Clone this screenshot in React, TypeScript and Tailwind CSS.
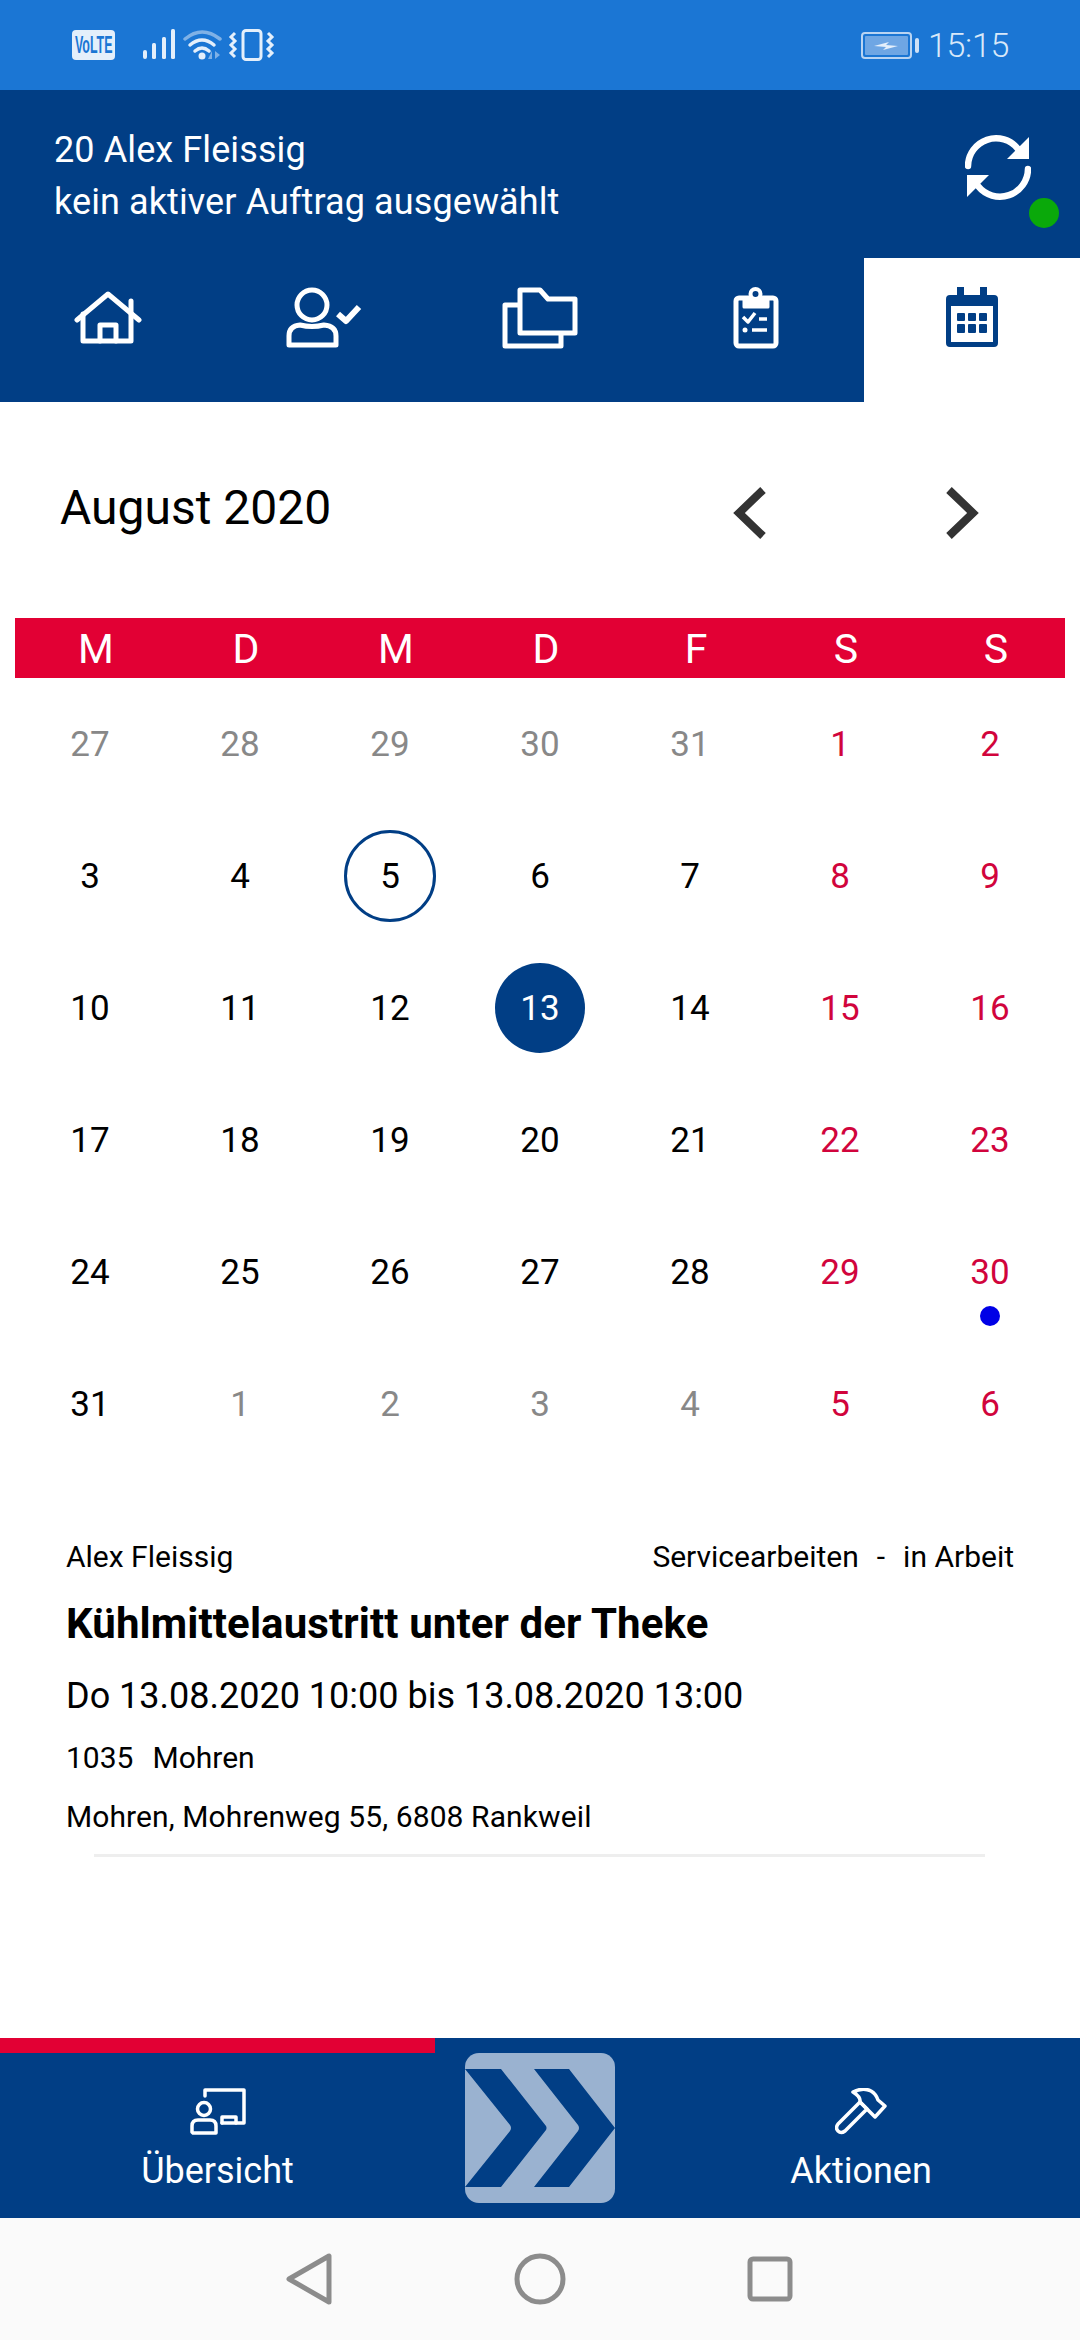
import React from "react";

const weeks = [
  [27, 28, 29, 30, 31, 1, 2],
  [3, 4, 5, 6, 7, 8, 9],
  [10, 11, 12, 13, 14, 15, 16],
  [17, 18, 19, 20, 21, 22, 23],
  [24, 25, 26, 27, 28, 29, 30],
  [31, 1, 2, 3, 4, 5, 6],
];
const heads = ["M", "D", "M", "D", "F", "S", "S"];

function StatusIcons() {
  return (
    <div className="flex items-center">
      <div className="w-[43px] h-[30px] rounded-[4px] bg-[#e4effb] ml-[72px] flex items-center justify-center overflow-hidden">
        <span className="text-[#1b76d4] text-[23px] font-bold leading-none scale-x-[0.54] font-['Liberation_Sans',sans-serif]">VoLTE</span>
      </div>
      <svg width="156" height="32" viewBox="0 0 156 32" className="ml-[27px]" fill="none">
        <g fill="#e4effb">
          <rect x="1" y="21" width="4" height="9" rx="2" />
          <rect x="10" y="14" width="4" height="16" rx="1.5" />
          <rect x="20" y="8" width="4" height="22" rx="1.5" />
          <rect x="29" y="0" width="4" height="30" rx="1.5" />
        </g>
        <path d="M43 10Q60 -4 78 10" stroke="#7fb1e6" strokeWidth="3.5" strokeLinecap="round" />
        <path d="M48 16Q60 6 72 16" stroke="#e4effb" strokeWidth="3.5" strokeLinecap="round" />
        <path d="M53 22Q60 16 67 22" stroke="#e4effb" strokeWidth="3.5" strokeLinecap="round" />
        <circle cx="60" cy="27" r="3.5" fill="#e4effb" />
        <path d="M70 30v-8l-4 8zM73 22v8l5-4z" fill="#7fb1e6" />
        <rect x="101" y="1.5" width="18" height="29" rx="3" stroke="#e4effb" strokeWidth="3" />
        <path d="M93 4l-4 4 4 4-4 4 4 4-4 4 4 4M126 4l4 4-4 4 4 4-4 4 4 4-4 4" stroke="#e4effb" strokeWidth="3" />
      </svg>
      <div className="flex-1" />
      <svg width="58" height="27" viewBox="0 0 58 27" fill="none" className="shrink-0">
        <rect x="1" y="1" width="49" height="25" rx="3" stroke="#b9d4f2" strokeWidth="2" />
        <rect x="4" y="4" width="43" height="19" rx="1" fill="#6ea6e4" />
        <rect x="54" y="6" width="4" height="15" rx="2" fill="#cfe1f6" />
        <path d="M13 14l15-4-3 3 12 1-15 4 3-3z" fill="#e4effb" />
      </svg>
      <span className="ml-[9px] mr-[71px] text-[34px] tracking-[-0.3px] leading-none text-[#d9e8f9] font-light">15:15</span>
    </div>
  );
}

function SyncIcon() {
  return (
    <svg width="66" height="66" viewBox="0 0 66 66" fill="none">
      <path d="M3 32A28 28 0 0 1 53 15" stroke="#fff" strokeWidth="6.5" strokeLinecap="round" />
      <path d="M64 3V25H42Z" fill="#fff" />
      <path d="M63 35A28 28 0 0 1 13 52" stroke="#fff" strokeWidth="6.5" strokeLinecap="round" />
      <path d="M2 63V41H24Z" fill="#fff" />
    </svg>
  );
}

function HomeIcon() {
  return (
    <svg width="68" height="53" viewBox="0 0 68 53" fill="none" stroke="#fff" strokeWidth="5" strokeLinecap="round" strokeLinejoin="round">
      <path d="M3 29L34 3L65 29" />
      <path d="M57 10V50H9V23" />
      <path d="M26 50V34H42V50" />
    </svg>
  );
}

function UserCheckIcon() {
  return (
    <svg width="76" height="62" viewBox="0 0 76 62" fill="none" stroke="#fff" strokeWidth="5" strokeLinejoin="round">
      <circle cx="26" cy="18" r="15" />
      <path d="M3 58V49Q3 39 14 38Q26 41 38 38Q50 39 50 49V58Z" />
      <path d="M52 27L60 34L73 20" strokeWidth="6" />
    </svg>
  );
}

function FolderIcon() {
  return (
    <svg width="76" height="62" viewBox="0 0 76 62" fill="none" stroke="#fff" strokeWidth="5" strokeLinejoin="round">
      <path d="M18 3H38L46 12H73V46H18Z" />
      <path d="M17 18H3V59H59V46" />
    </svg>
  );
}

function ClipboardIcon() {
  return (
    <svg width="46" height="62" viewBox="0 0 46 62" fill="none" stroke="#fff" strokeLinejoin="round">
      <rect x="3" y="11" width="40" height="48" rx="3" strokeWidth="5" />
      <path d="M11 11H35V20H11Z" fill="#fff" strokeWidth="3" />
      <circle cx="22.5" cy="7" r="5" fill="#013e85" strokeWidth="4" />
      <path d="M10 30L15 35L22 26" strokeWidth="3.5" />
      <path d="M26 32H34M19 43H34" strokeWidth="3.5" />
      <circle cx="12" cy="43" r="2.5" fill="#fff" strokeWidth="0" />
    </svg>
  );
}

function CalendarIcon() {
  return (
    <svg width="52" height="60" viewBox="0 0 52 60" fill="#013e85">
      <path fillRule="evenodd" d="M4 8H11V0H18V8H34V0H41V8H48Q52 8 52 12V56Q52 60 48 60H4Q0 60 0 56V12Q0 8 4 8ZM5 19V55H47V19Z" />
      <rect x="11" y="26" width="8" height="8" rx="1" />
      <rect x="22" y="26" width="8" height="8" rx="1" />
      <rect x="33" y="26" width="8" height="8" rx="1" />
      <rect x="11" y="37" width="8" height="9" rx="1" />
      <rect x="22" y="37" width="8" height="9" rx="1" />
      <rect x="33" y="37" width="8" height="9" rx="1" />
    </svg>
  );
}

function OverviewIcon() {
  return (
    <svg width="56" height="47" viewBox="0 0 56 47" fill="none" stroke="#fff" strokeWidth="3.5" strokeLinejoin="round" strokeLinecap="round">
      <circle cx="14" cy="21" r="6.5" />
      <path d="M2 44V38Q2 32 8 32H20Q26 32 26 38V45H3Z" />
      <path d="M15 8V2H54V35H32" />
      <path d="M32 35V29H46V35" />
    </svg>
  );
}

function HammerIcon() {
  return (
    <svg width="52" height="47" viewBox="0 0 52 47" fill="none" stroke="#fff" strokeWidth="3.5" strokeLinejoin="round">
      <path d="M18 4Q28 -1 36 3Q41 6 43 12L50 18L40 29L32 21L25 14Q26 9 18 4Z" />
      <path d="M25 14L32 21L10 43Q6 46 3 43Q0 40 3 36Z" />
    </svg>
  );
}

function Chevrons() {
  return (
    <svg width="150" height="150" viewBox="0 0 150 150" fill="#013e85">
      <path d="M0 16H36L81 73Q82 75 81 77L36 134H0L45 78Q47 75 45 72Z" />
      <path d="M69 16H104L150 75L104 134H69L113 78Q115 75 113 72Z" />
    </svg>
  );
}

function Day({ n, row, col }: { n: number; row: number; col: number }) {
  const muted = (row === 0 && col < 5) || (row === 5 && col > 0 && col < 5);
  const weekend = col > 4;
  const today = row === 1 && col === 2;
  const selected = row === 2 && col === 3;
  const dotted = row === 4 && col === 6;
  const color = selected
    ? "text-white bg-[#013e85]"
    : muted
      ? "text-[#888888]"
      : weekend
        ? "text-[#d1043c]"
        : "text-black";
  return (
    <div className="relative h-[132px] flex items-center justify-center">
      <div
        className={`rounded-full flex items-center justify-center ${selected ? "w-[90px] h-[90px]" : "w-[92px] h-[92px]"} ${today ? "border-[3px] border-[#013e85]" : ""} ${color}`}
      >
        <span className="text-[35px] leading-none">{n}</span>
      </div>
      {dotted && <div className="absolute left-[65px] top-[100px] w-[20px] h-[20px] rounded-full bg-[#0000e6]" />}
    </div>
  );
}

export default function App() {
  return (
    <div className="w-[1080px] h-[2340px] bg-white flex flex-col overflow-hidden font-['Roboto',sans-serif]">
      <div className="h-[90px] bg-[#1b76d4] shrink-0 flex flex-col justify-center">
        <StatusIcons />
      </div>

      <div className="h-[168px] bg-[#013e85] shrink-0 flex">
        <div className="pl-[54px] pt-[34px] text-white text-[36px] tracking-[0.1px] leading-[52px] flex-1">
          <div>20 Alex Fleissig</div>
          <div>kein aktiver Auftrag ausgewählt</div>
        </div>
        <div className="relative w-[115px] pt-[44px]">
          <SyncIcon />
          <div className="absolute left-[64px] top-[108px] w-[30px] h-[30px] rounded-full bg-[#0aa90a]" />
        </div>
      </div>

      <div className="h-[144px] bg-[#013e85] shrink-0 grid grid-cols-5">
        <div className="flex justify-center pt-[33px]"><HomeIcon /></div>
        <div className="flex justify-center pt-[29px]"><UserCheckIcon /></div>
        <div className="flex justify-center pt-[29px]"><FolderIcon /></div>
        <div className="flex justify-center pt-[29px]"><ClipboardIcon /></div>
        <div className="flex justify-center pt-[29px] bg-white"><CalendarIcon /></div>
      </div>

      <div className="h-[216px] shrink-0 flex items-center relative">
        <span className="ml-[60px] mb-[4px] text-[48px] leading-none text-black">August 2020</span>
        <div className="flex-1" />
        <svg width="34" height="52" viewBox="0 0 34 52" fill="none" stroke="#333333" strokeWidth="8" className="mr-[178px] mt-[6px]">
          <path d="M30 3L6 26L30 49" />
        </svg>
        <svg width="34" height="52" viewBox="0 0 34 52" fill="none" stroke="#333333" strokeWidth="8" className="mr-[101px] mt-[6px]">
          <path d="M4 3L28 26L4 49" />
        </svg>
      </div>

      <div className="mx-[15px] h-[60px] shrink-0 bg-[#e20034] grid grid-cols-7">
        {heads.map((h, i) => (
          <div key={i} className="flex items-center justify-center pl-[12px] pt-[2px] text-white text-[41px] leading-none">{h}</div>
        ))}
      </div>

      <div className="mx-[15px] shrink-0 grid grid-cols-7">
        {weeks.map((w, r) => w.map((n, c) => <Day key={`${r}-${c}`} n={n} row={r} col={c} />))}
      </div>

      <div className="pt-[70px] px-[66px] shrink-0 text-black">
        <div className="flex justify-between text-[30px] leading-[34px]">
          <span>Alex Fleissig</span>
          <span className="flex gap-[18px]"><span>Servicearbeiten</span><span>-</span><span>in Arbeit</span></span>
        </div>
        <div className="mt-[27px] text-[42px] tracking-[0.1px] leading-[46px] font-bold">Kühlmittelaustritt unter der Theke</div>
        <div className="mt-[28px] text-[36px] leading-[42px]">Do 13.08.2020 10:00 bis 13.08.2020 13:00</div>
        <div className="mt-[24px] text-[30px] leading-[34px] flex gap-[19px]"><span>1035</span><span>Mohren</span></div>
        <div className="mt-[25px] text-[30px] tracking-[0.1px] leading-[34px]">Mohren, Mohrenweg 55, 6808 Rankweil</div>
      </div>
      <div className="ml-[94px] w-[891px] h-[3px] mt-[20px] bg-[#eeeeee] shrink-0" />

      <div className="flex-1" />

      <div className="h-[180px] bg-[#013e85] shrink-0">
        <div className="h-[15px] w-[435px] bg-[#e20034]" />
        <div className="flex">
          <div className="w-[435px] flex flex-col items-center pt-[35px]">
            <OverviewIcon />
            <span className="mt-[15px] text-[36px] leading-[42px] text-white">Übersicht</span>
          </div>
          <div className="ml-[30px] w-[150px] h-[150px] rounded-[14px] bg-[#9ab2d0] overflow-hidden shrink-0">
            <Chevrons />
          </div>
          <div className="ml-[27px] w-[438px] flex flex-col items-center pt-[35px]">
            <HammerIcon />
            <span className="mt-[15px] text-[36px] leading-[42px] text-white">Aktionen</span>
          </div>
        </div>
      </div>

      <div className="h-[122px] bg-[#fafafa] shrink-0 relative flex items-center">
        <svg width="46" height="52" viewBox="0 0 46 52" fill="none" stroke="#8c8c8c" strokeWidth="5" strokeLinejoin="round" className="ml-[286px]">
          <path d="M43 3V49L3 26Z" />
        </svg>
        <svg width="52" height="52" viewBox="0 0 52 52" fill="none" stroke="#8c8c8c" strokeWidth="5" className="ml-[182px]">
          <circle cx="26" cy="26" r="23" />
        </svg>
        <svg width="46" height="46" viewBox="0 0 46 46" fill="none" stroke="#8c8c8c" strokeWidth="5" className="ml-[181px]">
          <rect x="3" y="3" width="40" height="40" rx="3" />
        </svg>
      </div>
    </div>
  );
}
